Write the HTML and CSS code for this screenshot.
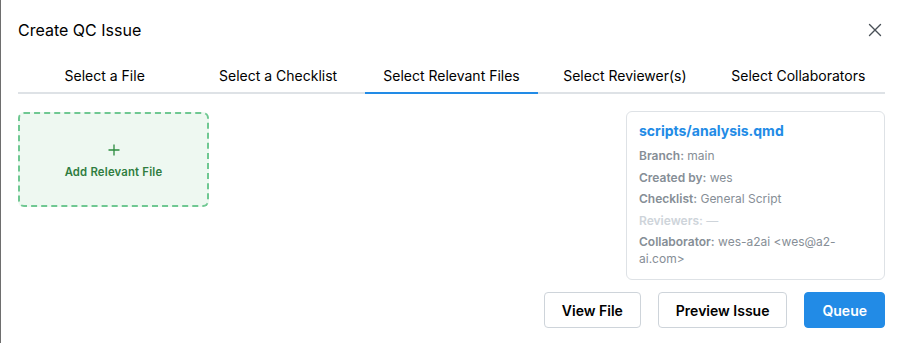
FILE: index.html
```html
<!DOCTYPE html>
<html>
<head>
<meta charset="utf-8">
<link rel="stylesheet" href="styles.css">
</head>
<body>
<div class="modal">
  <header class="header">
    <h2 class="title">Create QC Issue</h2>
    <button class="close" aria-label="Close">
      <svg width="14" height="14" viewBox="0 0 14 14"><path d="M1.5 1.5 L12.5 12.5 M12.5 1.5 L1.5 12.5" stroke="#495057" stroke-width="1.4" fill="none" stroke-linecap="round"/></svg>
    </button>
  </header>
  <nav class="tabs">
    <div class="tab">Select a File</div>
    <div class="tab">Select a Checklist</div>
    <div class="tab active">Select Relevant Files</div>
    <div class="tab">Select Reviewer(s)</div>
    <div class="tab">Select Collaborators</div>
  </nav>
  <div class="content">
    <div class="add-box">
      <svg class="plus" width="12" height="12" viewBox="0 0 12 12"><path d="M6 0.5 V11.5 M0.5 6 H11.5" stroke="#2b8a3e" stroke-width="1.3" fill="none"/></svg>
      <span class="add-label">Add Relevant File</span>
    </div>
    <div class="card">
      <div class="card-title">scripts/analysis.qmd</div>
      <div class="row"><b>Branch:</b> main</div>
      <div class="row"><b>Created by:</b> wes</div>
      <div class="row"><b>Checklist:</b> General Script</div>
      <div class="row faded"><b>Reviewers:</b> —</div>
      <div class="row"><b>Collaborator:</b> wes-a2ai &lt;wes@a2-ai.com&gt;</div>
    </div>
  </div>
  <div class="actions">
    <button class="btn">View File</button>
    <button class="btn">Preview Issue</button>
    <button class="btn primary">Queue</button>
  </div>
</div>
</body>
</html>
```

FILE: styles.css
```css
* { box-sizing: border-box; }
html, body { margin: 0; padding: 0; background: #fff; }
body {
  font-family: Inter, "Noto Sans", sans-serif;
  color: #000;
  width: 900px;
  height: 343px;
  overflow: hidden;
}
.modal {
  height: 343px;
  border-left: 1px solid #6e6e6e;
  padding: 0 15px 0 17px;
}
.header {
  height: 60px;
  display: flex;
  align-items: center;
  justify-content: space-between;
}
.title {
  margin: 0;
  font-size: 16px;
  font-weight: 400;
  line-height: 20px;
  color: #000;
}
.close {
  border: 0;
  background: none;
  padding: 0;
  width: 14px;
  height: 14px;
  margin-right: 3px;
  display: flex;
}
.tabs {
  display: grid;
  grid-template-columns: repeat(5, 1fr);
}
.tab {
  height: 34px;
  display: flex;
  align-items: center;
  justify-content: center;
  font-size: 14px;
  color: #000;
  border-bottom: 2px solid #dee2e6;
  padding-bottom: 1px;
}
.tab.active { border-bottom-color: #228be6; }
.content {
  margin-top: 17px;
  display: flex;
  justify-content: space-between;
  align-items: flex-start;
}
.add-box {
  margin-top: 1px;
  width: 191px;
  height: 95px;
  border: 2px dashed #6fc892;
  border-radius: 6px;
  background: #eef8f1;
  display: flex;
  flex-direction: column;
  align-items: center;
  justify-content: center;
  gap: 9px;
  padding-top: 4px;
}
.plus { display: block; }
.add-label {
  font-size: 11.3px;
  font-weight: 600;
  color: #2f7d3f;
  letter-spacing: 0.2px;
}
.card {
  width: 259px;
  height: 169px;
  border: 1px solid #dee2e6;
  border-radius: 6px;
  padding: 9px 12px 10px 12px;
  margin-right: 0;
}
.card-title {
  font-size: 14px;
  font-weight: 700;
  color: #228be6;
  line-height: 20px;
  margin-bottom: 6px;
}
.row {
  font-size: 12px;
  line-height: 17px;
  color: #868e96;
  margin-bottom: 4.5px;
}
.row b { font-weight: 600; }
.row.faded { color: #ced4da; }
.actions {
  margin-top: 12px;
  display: flex;
  justify-content: flex-end;
  gap: 17px;
}
.btn {
  height: 36px;
  border: 1px solid #ced4da;
  border-radius: 4px;
  background: #fff;
  font-family: Inter, "Noto Sans", sans-serif;
  font-size: 14px;
  font-weight: 600;
  color: #000;
  padding: 0 17px;
}
.btn.primary {
  background: #228be6;
  border-color: #228be6;
  color: #fff;
}
```
